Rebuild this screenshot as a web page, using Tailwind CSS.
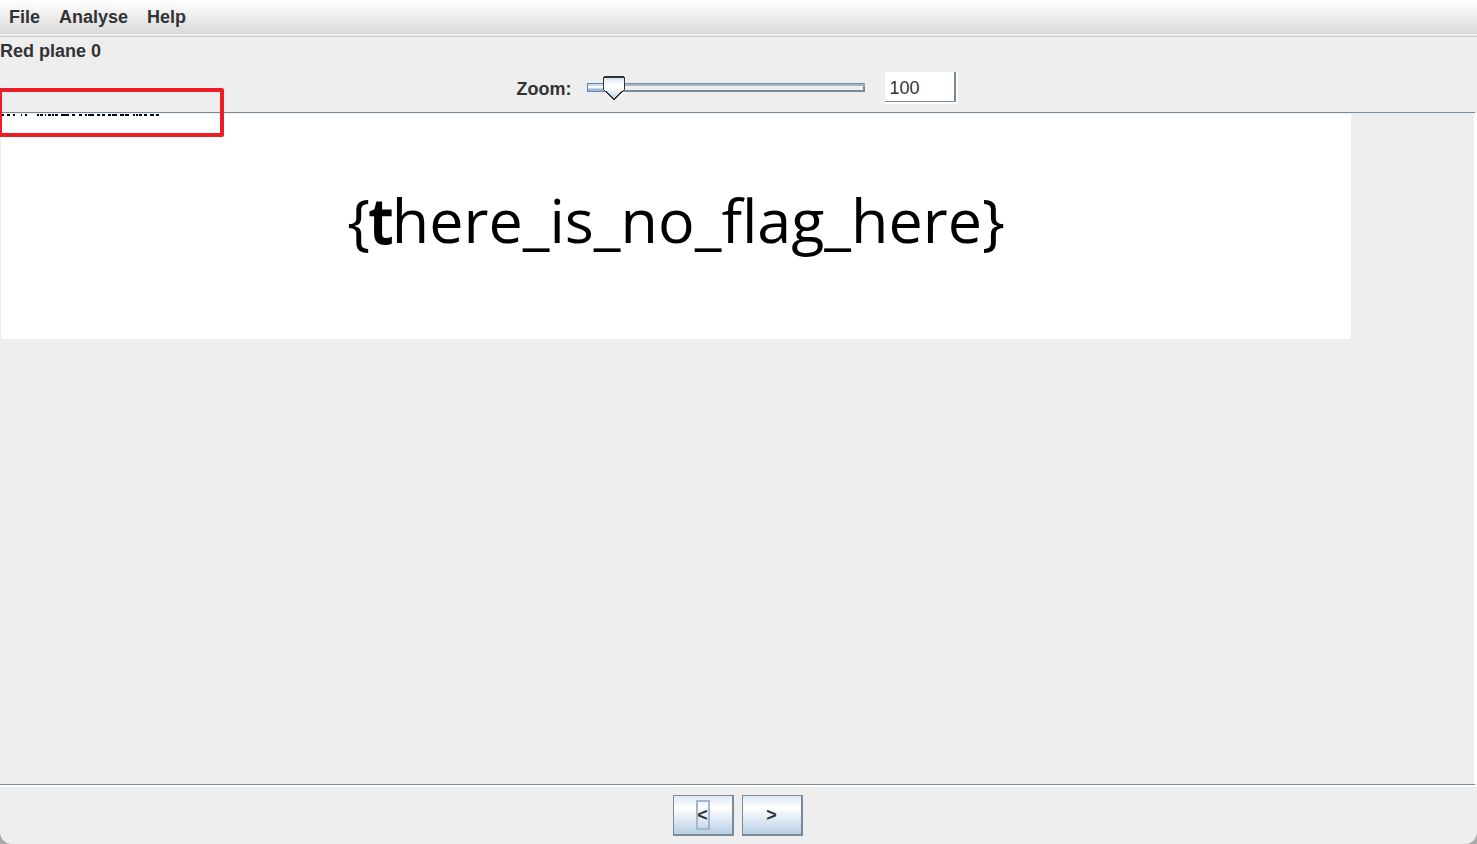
<!DOCTYPE html>
<html lang="en">
<head>
  <meta charset="UTF-8" />
  <title>StegSolve</title>
  <meta name="viewport" content="width=device-width, initial-scale=1.0" />
  <script src="https://cdn.jsdelivr.net/npm/@tailwindcss/browser@4"></script>
</head>
<body class="bg-[#a8a8a8]">
  <div class="min-h-screen flex flex-col bg-[#eeeeee] rounded-b-xl overflow-hidden text-[#333333] text-lg leading-5 font-bold font-['Liberation_Sans',Arial,sans-serif]">

    <!-- Menu bar -->
    <nav class="border-b border-[#cccccc] pb-0.5">
      <div class="flex items-center gap-[19px] h-[34px] pl-[9px] bg-linear-to-b from-white to-[#dadada]">
        <button type="button">File</button>
        <button type="button">Analyse</button>
        <button type="button">Help</button>
      </div>
    </nav>

    <h1 class="pt-1 h-7">Red plane 0</h1>

    <!-- Zoom controls -->
    <div class="flex justify-center items-center h-[47px] pb-px">
      <label for="zoom" class="mr-4 pt-0.5">Zoom:</label>
      <div class="relative w-[278px] h-6 mr-5">
        <svg class="absolute inset-0 w-full h-6" viewBox="0 0 278 24" shape-rendering="crispEdges" aria-hidden="true">
          <path d="M0 7h278v9H0z" fill="#7a8a99" />
          <path d="M0 8h278v2H0z" fill="#a3b8cc" />
          <path d="M0 10h276v4H0z" fill="#eeeeee" />
          <path d="M0 7h20v9H0z" fill="#6382bf" />
          <path d="M1 8h19v2H1z" fill="#c8ddf2" />
          <path d="M1 10h19v2H1z" fill="#ffffff" />
          <path d="M1 12h19v1H1z" fill="#c8d6e8" />
          <path d="M1 13h19v2H1z" fill="#a3b8cc" />
        </svg>
        <svg class="absolute left-4 top-0 w-[23px] h-6" viewBox="0 0 23 24" aria-hidden="true">
          <defs>
            <linearGradient id="thumb" x1="0" y1="0" x2="0" y2="1">
              <stop offset="0" stop-color="#c8ddf2" />
              <stop offset="0.3" stop-color="#ffffff" />
              <stop offset="0.5" stop-color="#ffffff" />
              <stop offset="1" stop-color="#b8cfe5" />
            </linearGradient>
          </defs>
          <path d="M1 1h20v13l-9 9h-1l-10-9z" fill="url(#thumb)" />
          <path d="M1 0h20v2H1zM0 1h1v13H0zM21 1h1v13h-1z" fill="#333333" shape-rendering="crispEdges" />
          <path d="M1 14l9.500 9h1l9.500-9" fill="none" stroke="#333333" stroke-width="1.300" shape-rendering="crispEdges" />
        </svg>
        <input id="zoom" type="range" min="0" max="1000" value="100" class="absolute inset-0 w-full h-6 opacity-0 cursor-pointer" />
      </div>
      <div class="border-r-2 border-b-2 border-white mr-0.5">
        <input id="zoomText" type="text" value="100" aria-label="Zoom percent" class="block w-[71px] h-[30px] pl-1 pt-1 bg-white font-normal border-r-2 border-b border-[#7a8a99] outline-none" />
      </div>
    </div>

    <!-- Image viewport -->
    <main class="relative grow mr-0.5 border-t border-b border-[#7a8a99] pl-px pt-px">
      <div class="absolute -right-0.5 top-0 bottom-0 w-[3px] bg-white"></div>
      <div class="relative w-[1350px] max-w-full h-[225px] pb-3.5 bg-white flex justify-center items-center">
        <!-- pixels hidden in the top row of the plane -->
        <svg class="absolute left-0 top-0 w-40 h-0.5" viewBox="0 0 160 2" shape-rendering="crispEdges" aria-hidden="true">
          <path d="M1 1h2m3 0h3m3 0h2m6 0h1m3 0h2m10 0h2m1 0h3m2 0h1m2 0h3m1 0h2m1 0h3m3 0h8m3 0h3m4 0h3m3 0h2m1 0h6m3 0h3m2 0h3m3 0h3m1 0h5m3 0h4m1 0h4m4 0h2m1 0h2m1 0h3m2 0h3m3 0h4m2 0h3" stroke="#000000" stroke-width="2" />
        </svg>
        <p class="font-normal text-black text-[61px] leading-none whitespace-nowrap font-['Open_Sans','Noto_Sans',sans-serif]">{<span class="[-webkit-text-stroke:3px_black]">t</span>here_is_no_flag_here}</p>
      </div>
      <div class="absolute -left-0.5 -top-[25px] w-[226px] h-[49px] border-4 border-[#ee1c25] rounded-xs"></div>
    </main>

    <!-- Plane navigation -->
    <footer class="flex justify-center gap-2 h-[59px] border-t-2 border-white pt-2 pr-0.5">
      <button type="button" class="w-[61px] h-[41px] flex justify-center items-center border border-r-2 border-b-2 border-[#7a8a99] bg-linear-to-b from-[#dde8f3] via-white via-30% to-[#b8cfe5]">
        <span class="w-3.5 h-[30px] border-2 border-[#a3b8cc] flex justify-center items-center">&lt;</span>
      </button>
      <button type="button" class="w-[61px] h-[41px] flex justify-center items-center border border-r-2 border-b-2 border-[#7a8a99] bg-linear-to-b from-[#dde8f3] via-white via-30% to-[#b8cfe5]">&gt;</button>
    </footer>
  </div>

  <script>
    const slider = document.getElementById('zoom');
    const zoomText = document.getElementById('zoomText');
    slider.addEventListener('input', () => {
      zoomText.value = slider.value;
    });
  </script>
</body>
</html>
